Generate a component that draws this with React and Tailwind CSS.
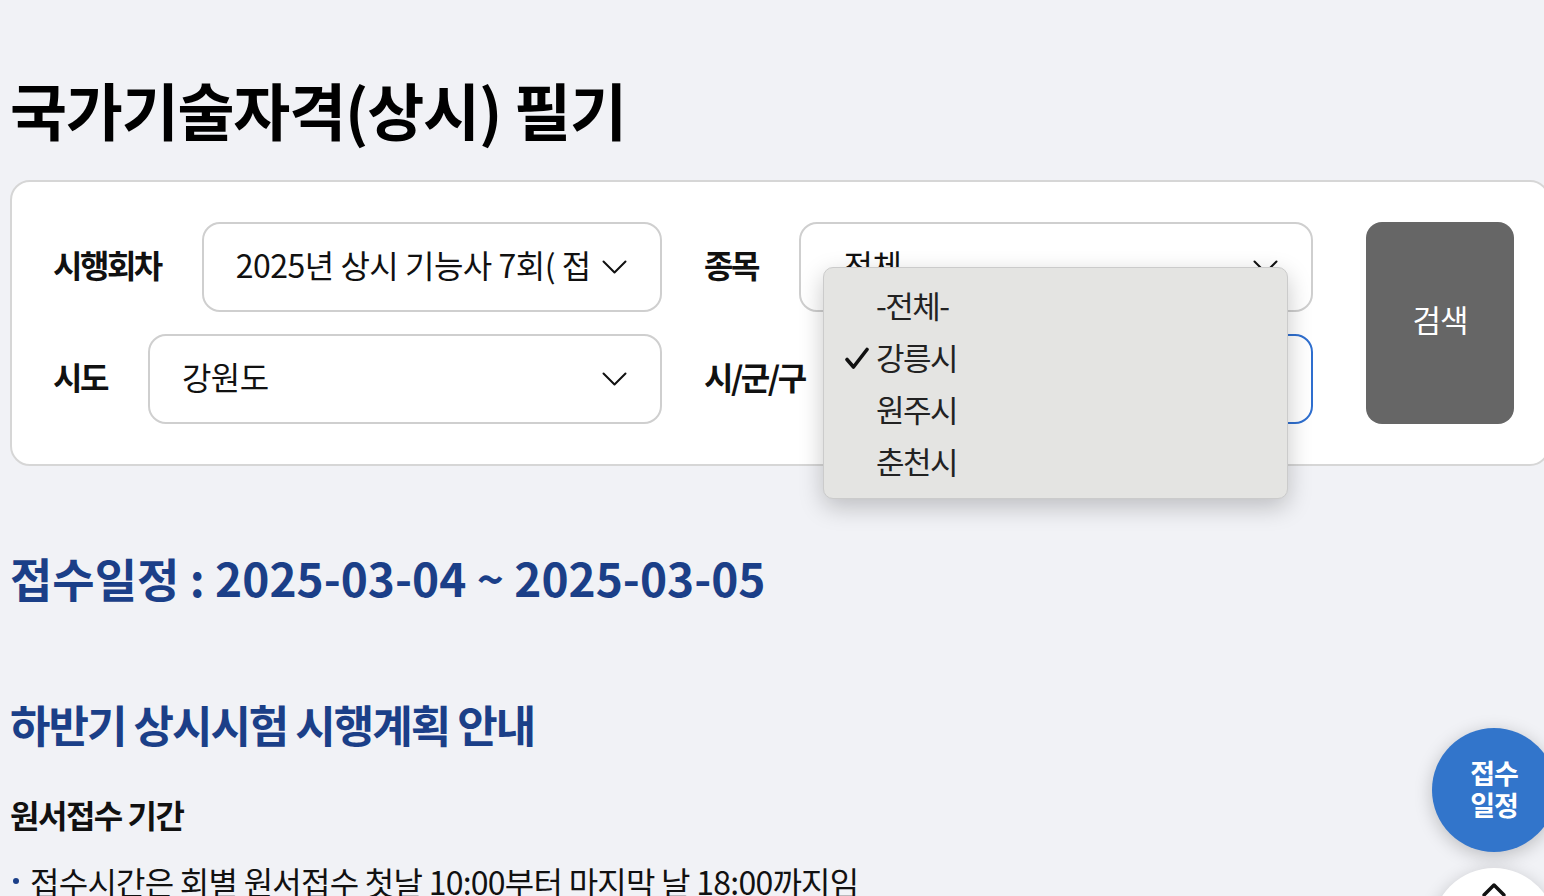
import { useState } from 'react'

const FONT = { fontFamily: '"Noto Sans CJK KR", "Noto Sans", sans-serif' }

const CITIES = ['-전체-', '강릉시', '원주시', '춘천시']

function Chevron() {
  return (
    <svg width="25" height="14" viewBox="0 0 25 14" fill="none">
      <polyline points="1.5,1.5 12.5,12.5 23.5,1.5" stroke="#111" strokeWidth="2" strokeLinecap="round" strokeLinejoin="round" />
    </svg>
  )
}

function Field({ label, value, focused }) {
  return (
    <div className="flex items-center gap-[41px] w-[609px]">
      <span className="text-[32px] font-bold tracking-[-2.5px] text-[#111] whitespace-nowrap pb-[6px]">{label}</span>
      <div
        className={`flex-1 h-[90px] rounded-[18px] bg-white flex items-center justify-between pl-[32px] pr-[33px] border-2 ${
          focused ? 'border-[#2f6fcf]' : 'border-[#cfcfcf]'
        }`}
      >
        <span className="text-[32px] tracking-[-0.5px] text-[#111] whitespace-nowrap overflow-hidden pb-[6px]">{value}</span>
        <Chevron />
      </div>
    </div>
  )
}

export default function App() {
  const [city, setCity] = useState('강릉시')

  return (
    <div className="min-h-[896px] bg-[#f1f2f6] overflow-hidden relative" style={FONT}>
      <div className="pl-[10px] pt-[64px]">
        <h1 className="text-[62px] font-bold tracking-[-1.2px] leading-[90px] text-black">국가기술자격(상시) 필기</h1>

        <div className="relative mt-[26px] w-[1540px] bg-white border-2 border-[#d6d6d6] rounded-[20px] pl-[41px] pt-[40px] pb-[40px] flex">
          <div className="grid grid-cols-[609px_609px] gap-x-[42px] gap-y-[22px]">
            <Field label="시행회차" value="2025년 상시 기능사 7회( 접" />
            <Field label="종목" value="-전체-" />
            <Field label="시도" value="강원도" />
            <Field label="시/군/구" value="" focused />
          </div>
          <button className="ml-[53px] w-[148px] rounded-[16px] bg-[#666666] text-white text-[31px] tracking-[-1px] pb-[8px]">검색</button>

          {/* native select popup */}
          <ul className="absolute left-[811px] top-[85px] w-[465px] pt-[11px] pb-[11px] bg-[#e4e4e2] border border-[#cbcbcb] rounded-[10px] shadow-[0_8px_24px_rgba(0,0,0,0.22)]">
            {CITIES.map((c) => (
              <li
                key={c}
                onClick={() => setCity(c)}
                className="relative h-[52px] flex items-center pl-[52px] text-[31px] tracking-[-1.5px] text-[#222] cursor-default"
              >
                {city === c && (
                  <svg className="absolute left-[21px] top-[16px]" width="24" height="23" viewBox="0 0 24 23">
                    <path d="M2 12.5 L8.5 20 L22 2.5" fill="none" stroke="#111" strokeWidth="3.6" strokeLinecap="round" strokeLinejoin="round" />
                  </svg>
                )}
                {c}
              </li>
            ))}
          </ul>
        </div>

        <h2 className="mt-[83px] text-[46px] font-bold tracking-[0px] leading-[56px] text-[#1b3f88]">접수일정 : 2025-03-04 ~ 2025-03-05</h2>

        <h2 className="mt-[91px] text-[44px] font-bold tracking-[-2px] leading-[56px] text-[#1b3f88]">하반기 상시시험 시행계획 안내</h2>

        <h3 className="mt-[42px] text-[32px] font-bold tracking-[-1.5px] leading-[40px] text-[#111]">원서접수 기간</h3>

        <ul className="mt-[25px]">
          <li className="flex items-center text-[32px] tracking-[-0.75px] leading-[44px] text-[#111]">
            <span className="w-[6px] h-[6px] rounded-full bg-[#1b3f88] ml-[3px] mr-[11px]" />
            접수시간은 회별 원서접수 첫날 10:00부터 마지막 날 18:00까지임
          </li>
        </ul>
      </div>

      {/* floating buttons */}
      <button className="absolute left-[1432px] top-[728px] w-[124px] h-[124px] rounded-full bg-[#3275cb] text-white text-[27px] font-bold leading-[32px] tracking-[-1px] shadow-[0_4px_18px_rgba(0,0,0,0.22)] flex flex-col items-center justify-center pb-[2px]">
        <span>접수</span>
        <span>일정</span>
      </button>
      <button className="absolute left-[1432px] top-[868px] w-[124px] h-[124px] rounded-full bg-white shadow-[0_4px_18px_rgba(0,0,0,0.2)] flex justify-center pt-[14px]">
        <svg width="26" height="16" viewBox="0 0 26 16">
          <polyline points="3,13 13,3 23,13" fill="none" stroke="#111" strokeWidth="3.5" strokeLinecap="round" strokeLinejoin="round" />
        </svg>
      </button>
    </div>
  )
}
